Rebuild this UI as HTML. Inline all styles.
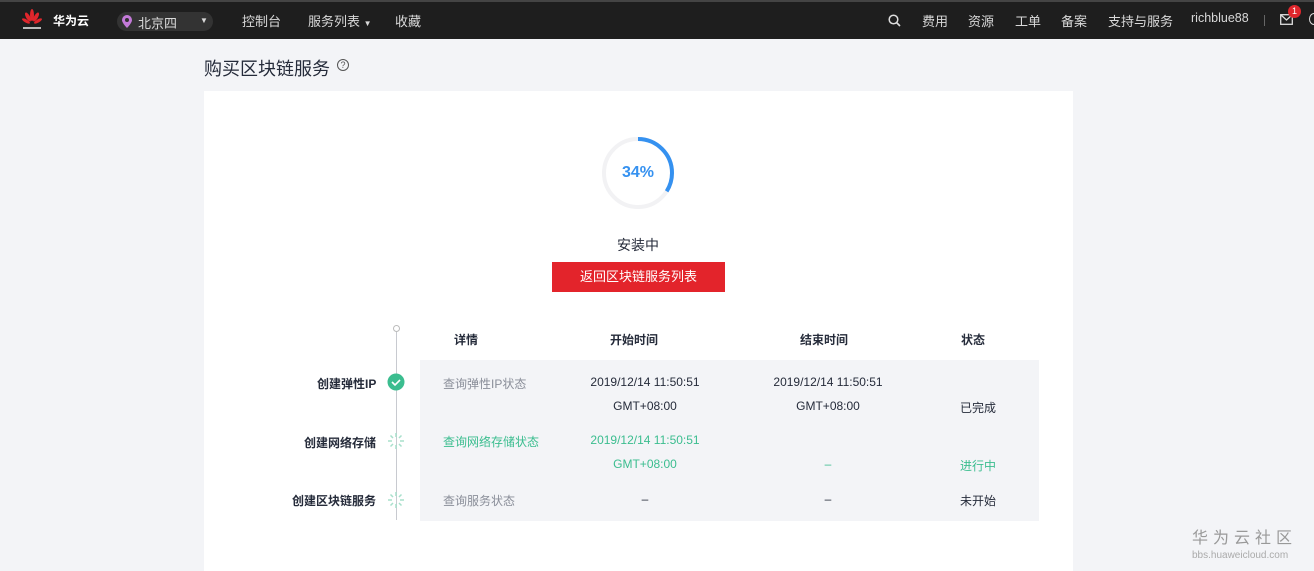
<!DOCTYPE html>
<html><head><meta charset="utf-8"><style>
*{margin:0;padding:0;box-sizing:border-box}
body{width:1314px;height:571px;overflow:hidden;background:#f3f4f7;font-family:"Liberation Sans","Noto Sans CJK SC",sans-serif;position:relative;font-size:12px;color:#252b3a}
.hd{position:absolute;left:0;top:0;width:1314px;height:39px;background:#1e1e1e;border-top:2px solid #444;color:#ddd}
.hd span{position:absolute;top:9px;font-size:13px;color:#d9d9d9}
.a{position:absolute;white-space:nowrap}
.card{position:absolute;left:204px;top:91px;width:869px;height:480px;background:#fff}
.tb{position:absolute;left:420px;top:360px;width:619px;height:161px;background:#f3f4f7}
.c{text-align:center;transform:translateX(-50%)}
.g{color:#8a8e99}.gr{color:#3bbd8f}
</style></head><body>
<div class="hd">
 <svg style="position:absolute;left:22px;top:7px" width="20" height="22" viewBox="0 0 20 22"><g fill="#e0262c"><ellipse cx="10" cy="6" rx="2" ry="6"/><ellipse cx="6" cy="8" rx="2" ry="5" transform="rotate(-30 6 8)"/><ellipse cx="14" cy="8" rx="2" ry="5" transform="rotate(30 14 8)"/><ellipse cx="4" cy="12" rx="1.6" ry="4.5" transform="rotate(-60 4 12)"/><ellipse cx="16" cy="12" rx="1.6" ry="4.5" transform="rotate(60 16 12)"/></g><rect x="1" y="18" width="18" height="2" fill="#bbb"/></svg>
 <span style="left:53px;font-weight:bold;color:#fff;font-size:12px;top:10px">华为云</span>
 <div style="position:absolute;left:117px;top:10px;width:96px;height:19px;border-radius:10px;background:#333"></div>
 <svg style="position:absolute;left:122px;top:13px" width="10" height="13" viewBox="0 0 10 13"><path d="M5 0a5 5 0 0 1 5 5c0 3-5 8-5 8S0 8 0 5a5 5 0 0 1 5-5z" fill="#c47ad9"/><circle cx="5" cy="5" r="2" fill="#333"/></svg>
 <span style="left:138px;top:11px">北京四</span>
 <span style="left:200px;top:14px;font-size:8px">▼</span>
 <span style="left:242px">控制台</span>
 <span style="left:308px">服务列表 <small style="font-size:8px">▼</small></span>
 <span style="left:395px">收藏</span>
 <svg style="position:absolute;left:888px;top:12px" width="13" height="13" viewBox="0 0 13 13"><circle cx="5.5" cy="5.5" r="4.3" stroke="#ddd" stroke-width="1.5" fill="none"/><path d="M8.5 8.5l3.5 3.5" stroke="#ddd" stroke-width="1.6"/></svg>
 <span style="left:922px">费用</span><span style="left:968px">资源</span><span style="left:1015px">工单</span><span style="left:1061px">备案</span><span style="left:1108px">支持与服务</span><span style="left:1191px;font-size:12.5px">richblue88</span>
 <div style="position:absolute;left:1264px;top:13px;width:1px;height:11px;background:#666"></div>
 <svg style="position:absolute;left:1280px;top:12px" width="13" height="11" viewBox="0 0 13 11"><rect x=".7" y=".7" width="11.6" height="9.6" fill="none" stroke="#ddd" stroke-width="1.3"/><path d="M1 1l5.5 5 5.5-5" fill="none" stroke="#ddd" stroke-width="1.3"/></svg>
 <div style="position:absolute;left:1288px;top:3px;width:13px;height:13px;border-radius:50%;background:#e0262c;color:#fff;font-size:9px;text-align:center;line-height:13px">1</div>
 <div style="position:absolute;left:1309px;top:11px;width:10px;height:12px;border:1.5px solid #ddd;border-radius:50%"></div>
</div>
<div class="a" style="left:204px;top:55px;font-size:18px;color:#252b3a">购买区块链服务</div>
<div class="a" style="left:337px;top:59px;width:12px;height:12px;border:1.3px solid #555;border-radius:50%;font-size:9px;text-align:center;line-height:10px;color:#555">?</div>
<div class="card"></div>
<svg style="position:absolute;left:600px;top:135px" width="76" height="76" viewBox="0 0 76 76"><circle cx="38" cy="38" r="34" fill="none" stroke="#f2f2f4" stroke-width="4"/><circle cx="38" cy="38" r="34" fill="none" stroke="#3591f0" stroke-width="4" stroke-dasharray="72.6 300" transform="rotate(-90 38 38)"/></svg>
<div class="a c" style="left:638px;top:164px;font-size:16px;font-weight:bold;color:#3591f0">34%</div>
<div class="a c" style="left:638px;top:235px;font-size:14px">安装中</div>
<div class="a" style="left:552px;top:262px;width:173px;height:30px;background:#e3242b;color:#fff;font-size:13px;text-align:center;line-height:30px">返回区块链服务列表</div>
<div class="tb"></div>
<div class="a" style="left:396px;top:330px;width:1px;height:190px;background:#c8cad0"></div>
<div class="a" style="left:393px;top:325px;width:7px;height:7px;border:1px solid #bbb;border-radius:50%;background:#fff"></div>
<div class="a c" style="left:466px;top:331px;font-weight:bold">详情</div>
<div class="a c" style="left:634px;top:331px;font-weight:bold">开始时间</div>
<div class="a c" style="left:824px;top:331px;font-weight:bold">结束时间</div>
<div class="a c" style="left:973px;top:331px;font-weight:bold">状态</div>
<div class="a" style="left:317px;top:375px;font-weight:bold">创建弹性IP</div>
<div class="a" style="left:304px;top:434px;font-weight:bold">创建网络存储</div>
<div class="a" style="left:292px;top:492px;font-weight:bold">创建区块链服务</div>
<svg style="position:absolute;left:387px;top:373px" width="18" height="18"><circle cx="9" cy="9" r="8.5" fill="#3bbd8f"/><path d="M5 9l3 3 5-5" stroke="#fff" stroke-width="1.6" fill="none"/></svg>
<svg style="position:absolute;left:387px;top:432px" width="18" height="18" stroke="#a8e0cc" stroke-width="1.5"><path d="M9 1v4M9 13v4M1 9h4M13 9h4M3.5 3.5l2.5 2.5M12 12l2.5 2.5M3.5 14.5L6 12M12 6l2.5-2.5"/></svg>
<svg style="position:absolute;left:387px;top:491px" width="18" height="18" stroke="#a8e0cc" stroke-width="1.5"><path d="M9 1v4M9 13v4M1 9h4M13 9h4M3.5 3.5l2.5 2.5M12 12l2.5 2.5M3.5 14.5L6 12M12 6l2.5-2.5"/></svg>
<div class="a g" style="left:443px;top:375px">查询弹性IP状态</div>
<div class="a c" style="left:645px;top:375px">2019/12/14 11:50:51</div>
<div class="a c" style="left:645px;top:399px">GMT+08:00</div>
<div class="a c" style="left:828px;top:375px">2019/12/14 11:50:51</div>
<div class="a c" style="left:828px;top:399px">GMT+08:00</div>
<div class="a c" style="left:978px;top:399px">已完成</div>
<div class="a gr" style="left:443px;top:433px">查询网络存储状态</div>
<div class="a c gr" style="left:645px;top:433px">2019/12/14 11:50:51</div>
<div class="a c gr" style="left:645px;top:457px">GMT+08:00</div>
<div class="a c gr" style="left:828px;top:457px">–</div>
<div class="a c gr" style="left:978px;top:457px">进行中</div>
<div class="a g" style="left:443px;top:492px">查询服务状态</div>
<div class="a c" style="left:645px;top:492px">–</div>
<div class="a c" style="left:828px;top:492px">–</div>
<div class="a c" style="left:978px;top:492px">未开始</div>
<div class="a" style="left:1192px;top:529px;font-size:16px;line-height:20px;color:#999;letter-spacing:5px">华为云社区</div>
<div class="a" style="left:1192px;top:550px;font-size:10px;color:#aaa">bbs.huaweicloud.com</div>
</body></html>
